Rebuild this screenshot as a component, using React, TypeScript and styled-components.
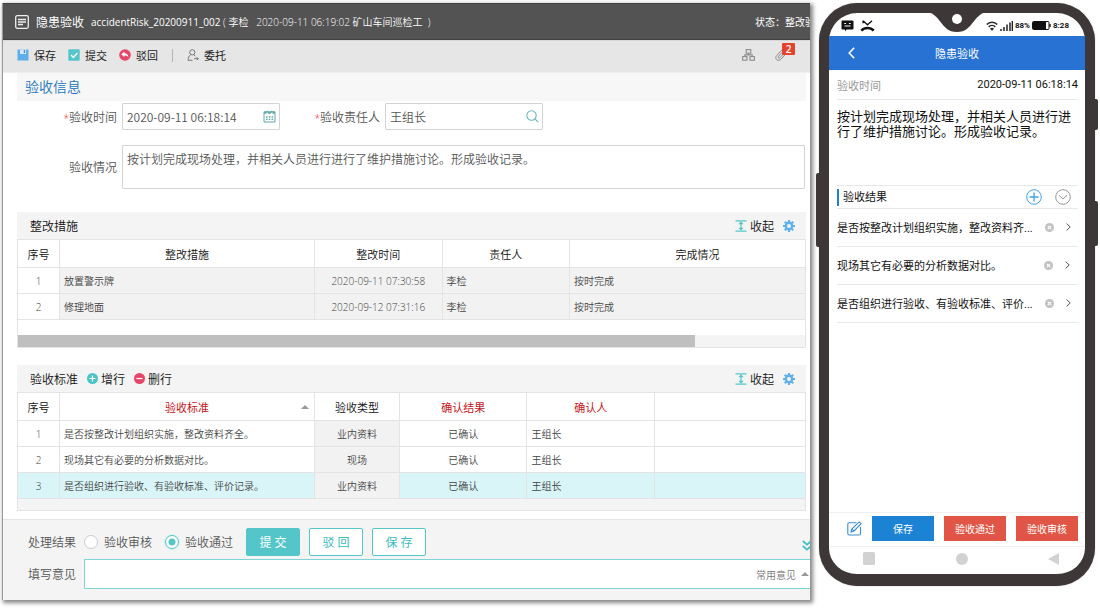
import React from "react";
import styled, { createGlobalStyle, css } from "styled-components";

const GlobalStyle = createGlobalStyle`
  * { box-sizing: border-box; }
  body {
    margin: 0;
    background: #fff;
    font-family: "Open Sans", "Noto Sans CJK SC", sans-serif;
    font-size: 12px;
    font-weight: 350;
    color: #333;
  }
  button, input, textarea { font: inherit; color: inherit; margin: 0; }
  svg { display: block; flex: none; }
`;

const teal = "#54c6c9";
const line = "#e4e4e4";

const Page = styled.main`
  display: flex;
  align-items: flex-start;
  gap: 9px;
  min-height: 100vh;
  padding: 3px 5px 9px 2px;
`;

/* ---------- desktop window ---------- */

const Window = styled.section`
  flex: 1;
  min-width: 0;
  min-height: calc(100vh - 12px);
  display: flex;
  flex-direction: column;
  overflow: hidden;
  background: #fff;
  border-left: 1px solid #999;
  box-shadow: 2px 2px 4px 1px #888;
`;

const TitleBar = styled.header`
  display: flex;
  align-items: center;
  height: 37px;
  padding-left: 12px;
  background: #535353;
  border-top: 1px solid #444;
  border-bottom: 1px solid #404040;
  color: #fff;
  font-size: 10px;
  font-weight: 400;
  white-space: pre;
`;

const Title = styled.h1`
  margin: 0 7px;
  font-size: 12px;
  font-weight: 400;
`;

const Meta = styled.span`
  font-weight: 350;
`;

const Status = styled.span`
  width: 55px;
  margin-left: auto;
  overflow: hidden;
`;

const Toolbar = styled.nav`
  display: flex;
  align-items: center;
  gap: 12px;
  height: 33px;
  padding: 0 15px 3px 14px;
  background: #e6e6e6;
  border-top: 1px solid #d6d6d6;
  border-bottom: 1px solid #eee;
`;

const PlainButton = styled.button`
  display: flex;
  align-items: center;
  padding: 0;
  border: 0;
  background: none;
  cursor: pointer;
`;

const ToolButton = styled(PlainButton)`
  gap: 5px;
  font-size: 11px;
  font-weight: 400;
  color: #222;
`;

const Divider = styled.span`
  width: 1px;
  height: 13px;
  margin: 0 2px;
  background: #b4b4b4;
`;

const ToolEnd = styled.div`
  display: flex;
  align-items: center;
  gap: 20px;
  margin-left: auto;
`;

const Clip = styled(PlainButton)`
  position: relative;
  width: 20px;
`;

const Badge = styled.span`
  position: absolute;
  top: -6px;
  right: 0;
  width: 13px;
  height: 12px;
  border-radius: 1px;
  background: #e5432d;
  color: #fff;
  font-size: 10px;
  line-height: 12px;
  font-weight: 600;
  text-align: center;
`;

const Body = styled.div`
  flex: 1;
  padding: 0 4px 0 14px;
`;

const SectionTitle = styled.h2`
  margin: 0 0 2px;
  padding: 0 8px;
  height: 28px;
  line-height: 28px;
  background: #f7f7f7;
  color: #1c74bd;
  font-size: 14px;
  font-weight: 350;
`;

const FormRow = styled.div`
  display: flex;
  align-items: center;
  gap: 5px;
  margin-bottom: 15px;
  color: #555;
`;

const Label = styled.label<{ $required?: boolean; $width?: number }>`
  width: ${(p) => p.$width ?? 100}px;
  text-align: right;
  white-space: nowrap;
  ${(p) =>
    p.$required &&
    css`
      &::before { content: "*"; color: #e22; font-size: 10px; }
    `}
`;

const Field = styled.div`
  display: flex;
  align-items: center;
  width: 158px;
  height: 27px;
  padding: 0 3px 0 4px;
  border: 1px solid #d4d4d4;
  border-radius: 1px;
  input {
    flex: 1;
    min-width: 0;
    padding: 0;
    border: 0;
    outline: 0;
    background: none;
    font-family: "Noto Sans CJK SC", sans-serif;
  }
`;

const Area = styled.textarea`
  display: block;
  flex: 1;
  height: 44px;
  margin-right: 1px;
  padding: 5px 4px;
  border: 1px solid #d4d4d4;
  border-radius: 1px;
  outline: 0;
  resize: none;
  line-height: 18px;
`;

const Panel = styled.section<{ $last?: boolean }>`
  margin-top: ${(p) => (p.$last ? 17 : 23)}px;
  border: 1px solid ${line};
  border-top: 0;
`;

const PanelHead = styled.div`
  display: flex;
  align-items: center;
  height: 28px;
  padding: 0 11px 0 13px;
  margin: 0 -1px;
  background: #f4f4f4;
  border-bottom: 1px solid ${line};
  color: #111;
`;

const PanelTitle = styled.h3`
  margin: 0;
  font-size: 12px;
  font-weight: 350;
`;

const HeadButton = styled(PlainButton)<{ $end?: boolean }>`
  gap: 3px;
  margin-left: ${(p) => (p.$end ? "auto" : "9px")};
`;

const TableView = styled.div`
  overflow: hidden;
`;

const Table = styled.table<{ $wide?: boolean }>`
  width: ${(p) => (p.$wide ? "calc(100% + 20px)" : "100%")};
  table-layout: fixed;
  border-spacing: 0;
  font-size: 10px;
  background: #fff;
`;

const Th = styled.th<{ $red?: boolean }>`
  height: 28px;
  padding: 0;
  border-right: 1px solid ${line};
  border-bottom: 1px solid ${line};
  font-size: 11px;
  font-weight: ${(p) => (p.$red ? 400 : 350)};
  color: ${(p) => (p.$red ? "#c4161c" : "#111")};
  &:last-child { border-right: 0; }
`;

const SortHead = styled.div`
  display: grid;
  grid-template-columns: 1fr auto 1fr;
  align-items: center;
  padding: 0 5px;
  svg { justify-self: end; }
`;

const Td = styled.td<{ $center?: boolean; $shade?: boolean }>`
  height: 26px;
  padding: 0 4px;
  border-right: 1px solid ${line};
  border-bottom: 1px solid ${line};
  color: #444;
  white-space: nowrap;
  text-align: ${(p) => (p.$center ? "center" : "left")};
  ${(p) => p.$shade && "background: #f2f2f2;"}
  &:last-child { border-right: 0; }
`;

const Tr = styled.tr<{ $active?: boolean }>`
  ${(p) => p.$active && "background: #d9f5f8;"}
`;

const ScrollTrack = styled.div`
  margin-top: 15px;
  height: 12px;
  background: #f4f4f4;
`;

const ScrollThumb = styled.div`
  width: 86%;
  height: 100%;
  background: #bfbfbf;
`;

const Strip = styled.div`
  height: 11px;
  background: #f4f4f4;
`;

const Footer = styled.footer`
  padding: 8px 0 11px 25px;
  background: #f4f4f4;
  border-top: 1px solid ${line};
  color: #555;
`;

const FooterRow = styled.div`
  display: flex;
  align-items: center;
  height: 28px;
`;

const Caption = styled.span`
  width: 56px;
`;

const Choice = styled.label`
  display: flex;
  align-items: center;
  gap: 6px;
  margin-right: 13px;
`;

const Radio = styled.input.attrs({ type: "radio" })`
  appearance: none;
  width: 14px;
  height: 14px;
  border: 1px solid #ccc;
  border-radius: 50%;
  background: #fff;
  &:checked {
    border-color: ${teal};
    background: radial-gradient(circle, ${teal} 0 3px, #fff 4px);
    box-shadow: 0 0 0 1px #d5f1f2;
  }
`;

const Action = styled.button<{ $solid?: boolean }>`
  width: 54px;
  height: 28px;
  margin-right: 9px;
  padding: 0;
  border: 1px solid ${teal};
  border-radius: 2px;
  background: ${(p) => (p.$solid ? teal : "#fff")};
  color: ${(p) => (p.$solid ? "#fff" : "#3dbcc0")};
  font-weight: 400;
  white-space: pre;
`;

const More = styled(PlainButton)`
  margin-left: auto;
  width: 8px;
  padding-top: 6px;
`;

const Opinion = styled.div`
  flex: 1;
  display: flex;
  align-items: center;
  height: 30px;
  padding-right: 1px;
  border: solid #7fd5d5;
  border-width: 1px 0 1px 1px;
  border-radius: 1px 0 0 1px;
  background: #fff;
  color: #777;
  font-size: 10px;
  input {
    flex: 1;
    min-width: 0;
    border: 0;
    outline: 0;
    background: none;
  }
  button { gap: 5px; }
`;

const OpinionRow = styled(FooterRow)`
  height: 30px;
  margin-top: 3px;
`;

/* ---------- phone ---------- */

const Phone = styled.section`
  position: relative;
  flex: none;
  display: flex;
  flex-direction: column;
  width: 276px;
  min-height: calc(100vh - 26px);
  border: solid #3e3737;
  border-width: 10px 10px 12px;
  border-radius: 38px;
  box-shadow: 0 0 1px #777;
  background: #fff;
  color: #111;
  font-family: Roboto, "Noto Sans CJK SC", sans-serif;
  font-size: 11px;
  font-weight: 400;
`;

const SideKey = styled.span<{ $left?: boolean; $top: number; $size: number }>`
  position: absolute;
  ${(p) => (p.$left ? "left: -13px; border-radius: 2px 0 0 2px;" : "right: -13px; border-radius: 0 2px 2px 0;")}
  top: ${(p) => p.$top}px;
  width: 4px;
  height: ${(p) => p.$size}px;
  background: #3e3737;
`;

const Notch = styled.svg`
  position: absolute;
  top: -1px;
  left: 50%;
  margin-left: -32px;
`;

const StatusBar = styled.div`
  display: flex;
  align-items: center;
  gap: 6px;
  height: 23px;
  padding: 2px 16px 0 12px;
  font-size: 8px;
  font-weight: 700;
`;

const StatusEnd = styled.div`
  display: flex;
  align-items: center;
  gap: 2px;
  margin-left: auto;
`;

const AppBar = styled.header`
  display: grid;
  grid-template-columns: 44px 1fr 44px;
  align-items: center;
  height: 34px;
  padding-bottom: 1px;
  background: #2772d2;
  color: #fff;
`;

const BackButton = styled(PlainButton)`
  padding-left: 19px;
`;

const AppTitle = styled.h2`
  margin: 0;
  font-size: 11px;
  font-weight: 400;
  text-align: center;
`;

const Screen = styled.div`
  flex: 1;
  padding: 0 7px 0 8px;
`;

const TimeRow = styled.div`
  display: flex;
  align-items: center;
  justify-content: space-between;
  height: 30px;
  border-bottom: 1px solid #e8e8e8;
  span { color: #999; }
`;

const Note = styled.p`
  margin: 0;
  min-height: 85px;
  padding-top: 9px;
  font-size: 13px;
  line-height: 15px;
`;

const ResultHead = styled.div`
  display: flex;
  align-items: center;
  gap: 13px;
  height: 24px;
  padding-right: 7px;
  border: solid #e8e8e8;
  border-width: 1px 0;
`;

const ResultTitle = styled.h3`
  flex: 1;
  margin: 0;
  padding: 1px 0 0 4px;
  border-left: 2px solid #1b82d6;
  font-size: 11px;
  line-height: 16px;
  font-weight: 400;
`;

const List = styled.ul`
  margin: 0;
  padding: 0;
  list-style: none;
`;

const Item = styled.li`
  display: flex;
  align-items: center;
  gap: 12px;
  height: 38px;
  padding: 0 8px 1px 0;
  border-bottom: 1px solid #e8e8e8;
  span { flex: 1; white-space: nowrap; }
`;

const PhoneActions = styled.div`
  display: flex;
  align-items: center;
  gap: 10px;
  height: 35px;
  padding: 0 7px 3px 18px;
  border: solid #f0f0f0;
  border-width: 1px 0;
`;

const PhoneButton = styled.button<{ $red?: boolean }>`
  flex: 1;
  height: 25px;
  padding: 0;
  border: 0;
  background: ${(p) => (p.$red ? "#e05545" : "#1b82d4")};
  color: #fff;
  font-size: 10px;
`;

const SystemNav = styled.div`
  display: flex;
  align-items: center;
  justify-content: space-between;
  height: 27px;
  padding: 0 26px 4px 34px;
`;

/* ---------- icons ---------- */

const DocIcon = () => (
  <svg width="14" height="14" viewBox="0 0 14 14" fill="none" stroke="#eee">
    <rect x="0.7" y="0.7" width="12.6" height="12.6" rx="1.5" strokeWidth="1.3" />
    <path d="M3 4.5h8M3 7h8M3 9.5h5" strokeWidth="1.3" />
  </svg>
);

const SaveIcon = () => (
  <svg width="12" height="12" viewBox="0 0 12 12">
    <path d="M0.5 0.5h11v11h-11z" fill="#5eaeea" />
    <path d="M3 0.5h6v4.5h-6z" fill="#d4eafa" />
    <path d="M6.8 1h1.2v3h-1.2z" fill="#3f8fd2" />
  </svg>
);

const CheckIcon = () => (
  <svg width="12" height="12" viewBox="0 0 12 12">
    <rect x="0.3" y="0.3" width="11.4" height="11.4" rx="0.8" fill={teal} />
    <path d="M3 6l2.4 2.4L9.3 4" fill="none" stroke="#fff" strokeWidth="1.4" />
  </svg>
);

const RejectIcon = () => (
  <svg width="12" height="12" viewBox="0 0 12 12">
    <circle cx="6" cy="6" r="5.8" fill="#e6466a" />
    <path d="M2.2 5.3L5.4 2.7v1.6c2.6 0 4 1.6 4 4.2-.9-1.3-2-1.9-4-1.9v1.5z" fill="#fff" />
  </svg>
);

const DelegateIcon = () => (
  <svg width="12" height="12" viewBox="0 0 12 12" fill="none" stroke="#777" strokeWidth="1">
    <circle cx="5.3" cy="3.3" r="2.6" />
    <path d="M3.8 5.5C2 6.8 1.2 8.6 1 11.3M6.8 5.6l1.4 1.7M1 11.3h4.5M7 9.7h4.3M9.8 8.2l1.5 1.5-1.5 1.5" />
  </svg>
);

const OrgIcon = () => (
  <svg width="13" height="12" viewBox="0 0 13 12" fill="none" stroke="#8c8c8c" strokeWidth="1.1">
    <rect x="4.2" y="0.6" width="4.6" height="3.6" />
    <rect x="0.6" y="7.6" width="4.4" height="3.6" />
    <rect x="8" y="7.6" width="4.4" height="3.6" />
    <path d="M6.5 4.2v1.7M2.8 7.6V5.9h7.4v1.7" />
  </svg>
);

const ClipIcon = () => (
  <svg width="12" height="12" viewBox="0 0 12 12" fill="none" stroke="#8c8c8c" strokeWidth="1">
    <path d="M10.5 5.2L6.2 10c-1.3 1.5-3.4 1.7-4.6.6-1.2-1.1-1-2.8.2-4.1L6 1.8c.9-1 2.3-1.1 3.1-.4.8.8.7 2-.2 3L5 8.7c-.5.5-1.2.6-1.6.2-.4-.4-.3-1 .1-1.5L7.2 3.3" />
  </svg>
);

const CalendarIcon = () => (
  <svg width="13" height="13" viewBox="0 0 13 13" fill="none" stroke="#62a9ac">
    <path d="M1 1.8h11v10.2H1z" />
    <path d="M1 2.8h2.500M5 2.8h3M9.500 2.8H12" strokeWidth="2" />
    <path d="M4.200 0.500v2.500M8.800 0.500v2.500" strokeWidth="1" />
    <path d="M3 7h7.400M3 9.400h7.400" strokeWidth="1.400" strokeDasharray="1.600 1.200" />
  </svg>
);

const SearchIcon = () => (
  <svg width="13" height="13" viewBox="0 0 13 13" fill="none" stroke="#6cb6b9" strokeWidth="1.1">
    <circle cx="5.5" cy="5.5" r="4.7" />
    <path d="M9 9l3.200 3.200" />
  </svg>
);

const CollapseIcon = () => (
  <svg width="12" height="12" viewBox="0 0 12 12" fill={teal} stroke={teal}>
    <path d="M0.5 0.8h11M0.5 11.2h11M6 3v6" strokeWidth="1.200" fill="none" />
    <path d="M6 1.200l2.600 3H3.400zM6 10.800L3.400 7.800h5.200z" stroke="none" />
  </svg>
);

const GearIcon = () => (
  <svg width="12" height="12" viewBox="0 0 12 12">
    <circle cx="6" cy="6" r="3.2" fill="none" stroke="#62b1e9" strokeWidth="2.4" />
    {[0, 45, 90, 135].map((a) => (
      <path key={a} d="M4.9 0h2.2v2.2H4.9zM4.9 9.8h2.2V12H4.9z" fill="#62b1e9" transform={`rotate(${a} 6 6)`} />
    ))}
  </svg>
);

const RoundIcon = ({ plus }: { plus?: boolean }) => (
  <svg width="11" height="11" viewBox="0 0 11 11">
    <circle cx="5.5" cy="5.5" r="5.5" fill={plus ? "#4cc3c7" : "#e6466a"} />
    <path d={plus ? "M2.5 5.5h6M5.5 2.5v6" : "M2.5 5.5h6"} stroke="#fff" strokeWidth="1.2" />
  </svg>
);

const UpTriangle = () => (
  <svg width="8" height="4" viewBox="0 0 8 4">
    <path d="M0 4l4-4 4 4z" fill="#999" />
  </svg>
);

const DoubleDown = () => (
  <svg width="10" height="11" viewBox="0 0 10 11" fill="none" stroke="#42bfc4" strokeWidth="1.8">
    <path d="M0.8 1l4.2 3.6L9.2 1M0.8 6l4.2 3.6L9.2 6" />
  </svg>
);

const MessageIcon = () => (
  <svg width="13" height="12" viewBox="0 0 13 12">
    <path d="M1.5 0.5h10a1 1 0 0 1 1 1v7a1 1 0 0 1-1 1H5.5L4 11.5V9.500H1.5a1 1 0 0 1-1-1v-7a1 1 0 0 1 1-1z" fill="#111" />
    <path d="M3.300 3.500h1.800M7.900 3.500h1.800M3.500 6h6" stroke="#fff" strokeWidth="1" />
  </svg>
);

const MissedIcon = () => (
  <svg width="15" height="12" viewBox="0 0 15 12" fill="none" stroke="#111">
    <path d="M3 0.800l4.500 4L12 0.800M3 0.800v2.500" strokeWidth="1.300" />
    <path d="M1.300 10.600C4.500 7.200 10.500 7.200 13.700 10.600" strokeWidth="2.600" />
  </svg>
);

const WifiIcon = () => (
  <svg width="12" height="10" viewBox="0 0 12 10" fill="none" stroke="#222" strokeWidth="1.500">
    <path d="M0.800 3.600C3.600 0.500 8.400 0.500 11.200 3.600M2.700 5.900c1.900-1.900 4.700-1.900 6.600 0" />
    <path d="M4 7.400Q6 5.900 8 7.400L6 9.800z" fill="#222" stroke="none" />
  </svg>
);

const SignalIcon = () => (
  <svg width="13" height="10" viewBox="0 0 13 10" stroke="#222" strokeWidth="1.500">
    <path d="M1 10V8M4 10V6M7 10V3.500M10 10V1.500M12.400 10V0" />
  </svg>
);

const BatteryIcon = () => (
  <svg width="19" height="9" viewBox="0 0 19 9">
    <rect x="0.500" y="0.500" width="16.500" height="8" rx="1" fill="#fff" stroke="#111" />
    <rect x="1" y="1" width="13" height="7" fill="#111" />
    <path d="M18 3v3" stroke="#111" strokeWidth="1.400" />
  </svg>
);

const BackIcon = () => (
  <svg width="7" height="12" viewBox="0 0 7 12" fill="none" stroke="#fff" strokeWidth="1.600">
    <path d="M6.200 0.800L1.200 6l5 5.200" />
  </svg>
);

const AddCircle = () => (
  <svg width="16" height="16" viewBox="0 0 16 16" fill="none" stroke="#3fa2e6" strokeWidth="1">
    <circle cx="8" cy="8" r="7.300" />
    <path d="M3.500 8h9M8 3.500v9" strokeWidth="1.300" />
  </svg>
);

const DownCircle = () => (
  <svg width="16" height="16" viewBox="0 0 16 16" fill="none" stroke="#999" strokeWidth="1">
    <circle cx="8" cy="8" r="7.300" />
    <path d="M4 6.300l4 3.700 4-3.700" />
  </svg>
);

const ClearIcon = () => (
  <svg width="9" height="9" viewBox="0 0 9 9">
    <circle cx="4.500" cy="4.500" r="4.500" fill="#c2c2c2" />
    <path d="M2.800 2.800l3.400 3.400M6.200 2.800L2.800 6.200" stroke="#fff" strokeWidth="1.100" />
  </svg>
);

const NextIcon = () => (
  <svg width="5" height="8" viewBox="0 0 5 8" fill="none" stroke="#555" strokeWidth="1">
    <path d="M0.600 0.600L4.200 4 0.600 7.400" />
  </svg>
);

const EditIcon = () => (
  <svg width="15" height="15" viewBox="0 0 15 15" fill="none" stroke="#3a8fd4" strokeWidth="1.100">
    <path d="M9.500 1.800H2.200a1.400 1.400 0 0 0-1.400 1.400v9.400A1.400 1.400 0 0 0 2.200 14h9.900a1.400 1.400 0 0 0 1.400-1.400V5.800" />
    <path d="M4 11l.8-2.900L12.200.9l1.900 1.800-7.300 7.500zM5 8.200l1.800 1.900" />
  </svg>
);

/* ---------- data ---------- */

const measures = [
  ["放置警示牌", "2020-09-11 07:30:58", "李检", "按时完成"],
  ["修理地面", "2020-09-12 07:31:16", "李检", "按时完成"],
];

const standards = [
  ["是否按整改计划组织实施，整改资料齐全。", "业内资料"],
  ["现场其它有必要的分析数据对比。", "现场"],
  ["是否组织进行验收、有验收标准、评价记录。", "业内资料"],
];

const results = [
  "是否按整改计划组织实施，整改资料齐...",
  "现场其它有必要的分析数据对比。",
  "是否组织进行验收、有验收标准、评价...",
];

const PanelTools = () => (
  <>
    <HeadButton $end>
      <CollapseIcon />
      收起
    </HeadButton>
    <HeadButton aria-label="设置">
      <GearIcon />
    </HeadButton>
  </>
);

const DesktopWindow = () => (
  <Window>
    <TitleBar>
      <DocIcon />
      <Title>隐患验收</Title>
      <span>accidentRisk_20200911_002</span>
      <Meta>{" ( 李检   2020-09-11 06:19:02 矿山车间巡检工  )"}</Meta>
      <Status>状态：整改验收</Status>
    </TitleBar>
    <Toolbar>
      <ToolButton><SaveIcon />保存</ToolButton>
      <ToolButton><CheckIcon />提交</ToolButton>
      <ToolButton><RejectIcon />驳回</ToolButton>
      <Divider />
      <ToolButton><DelegateIcon />委托</ToolButton>
      <ToolEnd>
        <PlainButton aria-label="流程图"><OrgIcon /></PlainButton>
        <Clip aria-label="附件">
          <ClipIcon />
          <Badge>2</Badge>
        </Clip>
      </ToolEnd>
    </Toolbar>
    <Body>
      <SectionTitle>验收信息</SectionTitle>
      <FormRow>
        <Label $required htmlFor="time">验收时间</Label>
        <Field>
          <input id="time" defaultValue="2020-09-11 06:18:14" />
          <PlainButton aria-label="选择日期"><CalendarIcon /></PlainButton>
        </Field>
        <Label $required $width={95} htmlFor="owner">验收责任人</Label>
        <Field>
          <input id="owner" defaultValue="王组长" />
          <PlainButton aria-label="搜索"><SearchIcon /></PlainButton>
        </Field>
      </FormRow>
      <FormRow>
        <Label htmlFor="detail">验收情况</Label>
        <Area id="detail" defaultValue="按计划完成现场处理，并相关人员进行进行了维护措施讨论。形成验收记录。" />
      </FormRow>

      <Panel>
        <PanelHead>
          <PanelTitle>整改措施</PanelTitle>
          <PanelTools />
        </PanelHead>
        <TableView>
          <Table $wide>
            <colgroup>
              <col style={{ width: 42 }} />
              <col style={{ width: "31.6%" }} />
              <col style={{ width: "15.8%" }} />
              <col style={{ width: "15.8%" }} />
              <col />
            </colgroup>
            <thead>
              <tr>
                <Th>序号</Th>
                <Th>整改措施</Th>
                <Th>整改时间</Th>
                <Th>责任人</Th>
                <Th>完成情况</Th>
              </tr>
            </thead>
            <tbody>
              {measures.map(([name, time, owner, state], i) => (
                <Tr key={name}>
                  <Td $center>{i + 1}</Td>
                  <Td $shade>{name}</Td>
                  <Td $shade $center>{time}</Td>
                  <Td $shade>{owner}</Td>
                  <Td $shade>{state}</Td>
                </Tr>
              ))}
            </tbody>
          </Table>
        </TableView>
        <ScrollTrack>
          <ScrollThumb />
        </ScrollTrack>
      </Panel>

      <Panel $last>
        <PanelHead>
          <PanelTitle>验收标准</PanelTitle>
          <HeadButton><RoundIcon plus />增行</HeadButton>
          <HeadButton><RoundIcon />删行</HeadButton>
          <PanelTools />
        </PanelHead>
        <Table>
          <colgroup>
            <col style={{ width: 42 }} />
            <col style={{ width: "32.4%" }} />
            <col style={{ width: "10.8%" }} />
            <col style={{ width: "16.2%" }} />
            <col style={{ width: "16.2%" }} />
            <col />
          </colgroup>
          <thead>
            <tr>
              <Th>序号</Th>
              <Th $red>
                <SortHead><i />验收标准<UpTriangle /></SortHead>
              </Th>
              <Th>验收类型</Th>
              <Th $red>确认结果</Th>
              <Th $red>确认人</Th>
              <Th />
            </tr>
          </thead>
          <tbody>
            {standards.map(([name, kind], i) => (
              <Tr key={name} $active={i === 2}>
                <Td $center>{i + 1}</Td>
                <Td>{name}</Td>
                <Td $shade $center>{kind}</Td>
                <Td $center>已确认</Td>
                <Td>王组长</Td>
                <Td />
              </Tr>
            ))}
          </tbody>
        </Table>
        <Strip />
      </Panel>
    </Body>
    <Footer>
      <FooterRow>
        <Caption>处理结果</Caption>
        <Choice><Radio name="result" />验收审核</Choice>
        <Choice><Radio name="result" defaultChecked />验收通过</Choice>
        <Action $solid>提 交</Action>
        <Action>驳 回</Action>
        <Action>保 存</Action>
        <More aria-label="更多"><DoubleDown /></More>
      </FooterRow>
      <OpinionRow>
        <Caption as="label" htmlFor="opinion">填写意见</Caption>
        <Opinion>
          <input id="opinion" />
          <PlainButton>常用意见<UpTriangle /></PlainButton>
        </Opinion>
      </OpinionRow>
    </Footer>
  </Window>
);

const PhoneView = () => (
  <Phone>
    <SideKey $left $top={160} $size={74} />
    <SideKey $top={86} $size={31} />
    <SideKey $top={188} $size={45} />
    <StatusBar>
      <MessageIcon />
      <MissedIcon />
      <StatusEnd>
        <WifiIcon />
        <SignalIcon />
        88%
        <BatteryIcon />
        8:28
      </StatusEnd>
    </StatusBar>
    <Notch width="64" height="20" viewBox="0 0 64 20">
      <path d="M0 0C16 0 15 20 32 20S48 0 64 0z" fill="#3e3737" />
      <circle cx="32" cy="7" r="5" fill="#fff" />
    </Notch>
    <AppBar>
      <BackButton aria-label="返回"><BackIcon /></BackButton>
      <AppTitle>隐患验收</AppTitle>
    </AppBar>
    <Screen>
      <TimeRow>
        <span>验收时间</span>
        <time>2020-09-11 06:18:14</time>
      </TimeRow>
      <Note>按计划完成现场处理，并相关人员进行进行了维护措施讨论。形成验收记录。</Note>
      <ResultHead>
        <ResultTitle>验收结果</ResultTitle>
        <PlainButton aria-label="添加"><AddCircle /></PlainButton>
        <PlainButton aria-label="展开"><DownCircle /></PlainButton>
      </ResultHead>
      <List>
        {results.map((text) => (
          <Item key={text}>
            <span>{text}</span>
            <PlainButton aria-label="删除"><ClearIcon /></PlainButton>
            <NextIcon />
          </Item>
        ))}
      </List>
    </Screen>
    <PhoneActions>
      <EditIcon />
      <PhoneButton>保存</PhoneButton>
      <PhoneButton $red>验收通过</PhoneButton>
      <PhoneButton $red>验收审核</PhoneButton>
    </PhoneActions>
    <SystemNav>
      <svg width="12" height="13" viewBox="0 0 12 13"><rect width="12" height="13" rx="1.500" fill="#d2d2d2" /></svg>
      <svg width="12" height="12" viewBox="0 0 12 12"><circle cx="6" cy="6" r="6" fill="#d2d2d2" /></svg>
      <svg width="11" height="12" viewBox="0 0 11 12"><path d="M0 6L11 0v12z" fill="#d2d2d2" /></svg>
    </SystemNav>
  </Phone>
);

export default function App() {
  return (
    <>
      <GlobalStyle />
      <Page>
        <DesktopWindow />
        <PhoneView />
      </Page>
    </>
  );
}
